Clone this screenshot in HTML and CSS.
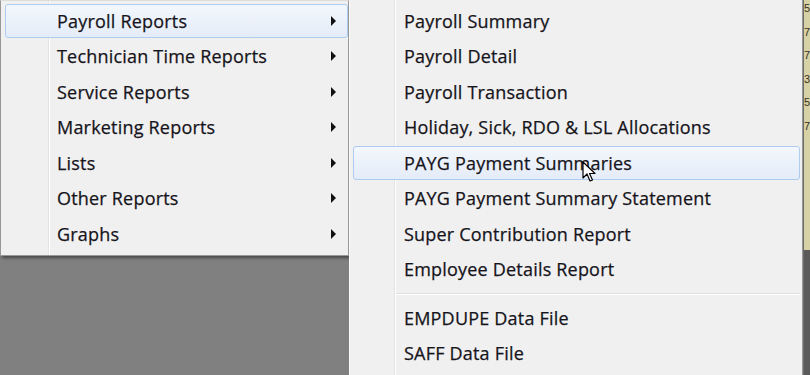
FILE: index.html
```html
<!DOCTYPE html>
<html lang="en">
<head>
    <meta charset="UTF-8">
    <title>Reports Menu</title>
    <link rel="stylesheet" href="styles.css">
</head>
<body>
    <div class="screen">
        <div class="left-col">
            <ul class="menu main-menu">
                <li class="item active"><span>Payroll Reports</span><i class="arrow"></i></li>
                <li class="item"><span>Technician Time Reports</span><i class="arrow"></i></li>
                <li class="item"><span>Service Reports</span><i class="arrow"></i></li>
                <li class="item"><span>Marketing Reports</span><i class="arrow"></i></li>
                <li class="item"><span>Lists</span><i class="arrow"></i></li>
                <li class="item"><span>Other Reports</span><i class="arrow"></i></li>
                <li class="item"><span>Graphs</span><i class="arrow"></i></li>
            </ul>
        </div>

        <ul class="menu sub-menu">
            <li class="item"><span>Payroll Summary</span></li>
            <li class="item"><span>Payroll Detail</span></li>
            <li class="item"><span>Payroll Transaction</span></li>
            <li class="item"><span>Holiday, Sick, RDO &amp; LSL Allocations</span></li>
            <li class="item active"><span>PAYG Payment Summaries</span></li>
            <li class="item"><span>PAYG Payment Summary Statement</span></li>
            <li class="item"><span>Super Contribution Report</span></li>
            <li class="item"><span>Employee Details Report</span></li>
            <li class="separator"></li>
            <li class="item"><span>EMPDUPE Data File</span></li>
            <li class="item"><span>SAFF Data File</span></li>
        </ul>

        <div class="behind">
            <div class="behind-text">5<br>7<br>7<br>3<br>5<br>7</div>
        </div>

        <svg class="cursor" width="14" height="22" viewBox="0 0 14 22">
            <path d="M1 1 L1 17 L5 13 L8 20 L10.5 19 L7.5 12.5 L13 12.5 Z" fill="#fff" stroke="#000" stroke-width="1.2" stroke-linejoin="round"/>
        </svg>
    </div>
</body>
</html>
```

FILE: styles.css
```css
* {
    margin: 0;
    padding: 0;
    box-sizing: border-box;
}

body {
    font-family: 'Open Sans', 'Noto Sans', sans-serif;
    background-color: #808080;
    color: #16141b;
    width: 810px;
    height: 375px;
    overflow: hidden;
}

.screen {
    position: relative;
    display: flex;
    height: 375px;
}

.left-col {
    width: 349px;
    flex: none;
}

.menu {
    list-style: none;
    background-color: #f0f0f0;
}

.main-menu {
    height: 256px;
    border-left: 1px solid #979797;
    border-right: 1px solid #979797;
    border-bottom: 1px solid #979797;
    border-top: 1px solid #dcdcdc;
    padding-top: 2px;
    padding-left: 4px;
    box-shadow: 2px 2px 3px rgba(0, 0, 0, 0.45);
    background-image: linear-gradient(to right, transparent 47px, #e2e3e3 47px, #e2e3e3 48px, #fff 48px, #fff 49px, transparent 49px);
}

.sub-menu {
    width: 454px;
    flex: none;
    border-left: 1px solid #fafafa;
    border-right: 1px solid #979797;
    padding-top: 3px;
    padding-left: 3px;
    padding-right: 2px;
    background-image: linear-gradient(to right, transparent 44px, #e2e3e3 44px, #e2e3e3 45px, #fff 45px, #fff 46px, transparent 46px);
}

.item {
    position: relative;
    display: flex;
    align-items: center;
    height: 35.5px;
    font-size: 18px;
    letter-spacing: 0.2px;
    -webkit-text-stroke: 0.25px #16141b;
    border: 1px solid transparent;
    border-radius: 3px;
}

.main-menu .item span {
    padding-left: 51px;
}

.sub-menu .item span {
    padding-left: 50px;
}

.item.active {
    border-color: #aeccf1;
    background: linear-gradient(#f3f7fd, #e4ecf8);
    height: 34px;
    margin: 0.75px 0;
}

.arrow {
    position: absolute;
    right: 11px;
    top: 50%;
    margin-top: -5px;
    width: 0;
    height: 0;
    border-top: 5px solid transparent;
    border-bottom: 5px solid transparent;
    border-left: 5px solid #111;
}

.separator {
    height: 13px;
    margin-left: 43px;
    background-image: linear-gradient(transparent 6px, #e0e0e0 6px, #e0e0e0 7px, #fff 7px, #fff 8px, transparent 8px);
}

.behind {
    flex: 1;
    border-left: 1px solid #6c6c6c;
    background: linear-gradient(#d6d2a6 0, #d6d2a6 250px, #5a5a5a 250px);
    overflow: hidden;
}

.behind-text {
    font-family: 'Liberation Sans', sans-serif;
    font-size: 11px;
    line-height: 23.5px;
    margin-top: -3px;
    color: #3a3020;
}

.cursor {
    position: absolute;
    left: 582px;
    top: 161px;
}
```
